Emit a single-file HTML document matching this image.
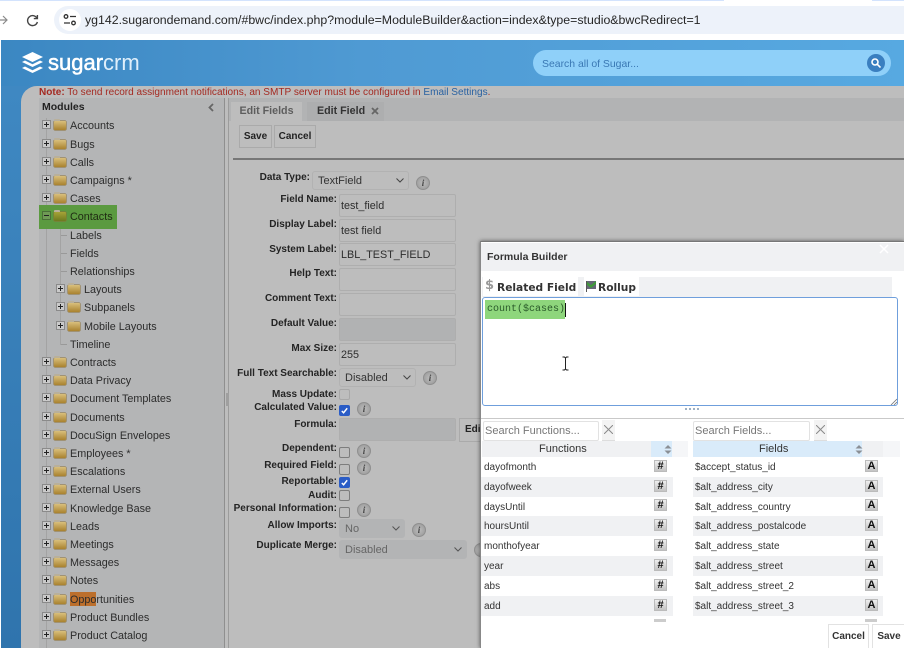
<!DOCTYPE html>
<html><head><meta charset="utf-8"><title>SugarCRM Studio</title>
<style>
html,body{margin:0;padding:0;width:904px;height:648px;overflow:hidden;background:#fff}
#w{position:relative;width:904px;height:648px;overflow:hidden;font-family:"Liberation Sans",sans-serif;font-size:11px;color:#222;filter:blur(.35px)}
#w div,#w span.a,#w i,#w svg.a{position:absolute;display:block}
i{font-style:normal}
.r{left:0;width:224px;height:18px;line-height:18px;color:#2c2c2c;white-space:nowrap;font-size:10.8px;margin-top:.9px}
.r span{position:absolute;left:70px;top:0}
.r .p{left:42px;top:3px;width:7px;height:7px;border:1px solid #8a8a8a;background:#cacaca}
.r .p:after{content:"";position:absolute;left:1px;top:3px;width:5px;height:1px;background:#222}
.r .p:before{content:"";position:absolute;left:3px;top:1px;width:1px;height:5px;background:#222}
.r .p.m:before{display:none}
.r .f{left:54px;top:4px;width:12px;height:9px;background:linear-gradient(#d9bf7c,#a9822f);border-radius:1px;box-shadow:0 0 0 .5px #8b6f33}
.r .f:before{content:"";position:absolute;left:0;top:-2px;width:6px;height:2px;background:#b9b09a;border-radius:1px 1px 0 0}
.r.n span{left:84px}.r.n .p{left:56px}.r.n .f{left:68px}
.r.l:before{content:"";position:absolute;left:61px;top:8px;width:6px;height:1px;background:#999}
.lb{right:567px;font-weight:bold;font-size:10px;color:#242424;white-space:nowrap;line-height:14px;margin-top:1px}
.in{left:339px;width:115px;height:21px;border:1px solid #aeaeae;border-radius:2px;background:#bdbdbd;line-height:23px;font-size:10.8px;color:#2d2d2d;text-indent:1px}
.sel{border:1px solid #b2b2b2;border-radius:3px;height:17px;line-height:18px;font-size:11px;color:#333;text-indent:5px;background:#bdbdbd}
.sel svg{position:absolute;right:4px;top:6px}
.ic{width:12px;height:12px;border-radius:50%;background:radial-gradient(#bcbcbc,#969696);border:1px solid #8f8f8f;font:italic bold 9px/12px "Liberation Serif",serif;text-align:center;color:#444}
.cb{left:339px;width:9px;height:9px;border:1px solid #7d7d7d;border-radius:2px}
.cb.on{background:#2a5cc6;border-color:#2a5cc6}
.cb.on svg{position:absolute;left:0;top:0}
.cb.e{border-color:#a8a8a8}
.btn{height:21px;background:#bdbdbd;border:1px solid #aaa;font-weight:bold;font-size:10px;line-height:21px;text-align:center;color:#222}
.fr,.fb{height:19px;line-height:22px;font-size:10px;color:#333;white-space:nowrap}
.rb{width:11px;height:10px;border:1px solid #bbb;background:linear-gradient(#eee,#c4c4c4);font-weight:bold;font-size:11px;line-height:11px;text-align:center;color:#111}
</style></head><body><div id="w">

<!-- browser bar -->
<div style="left:0;top:0;width:724px;height:1px;background:#d3e3fd"></div>
<div style="left:872px;top:0;width:32px;height:1px;background:#d3e3fd"></div>
<div style="left:54px;top:6px;width:850px;height:28px;background:#edf2fa;border-radius:14px 0 0 14px"></div>
<div style="left:59px;top:9px;width:22px;height:22px;background:#fff;border-radius:50%"></div>
<svg class="a" style="left:62px;top:13px" width="16" height="14" viewBox="0 0 16 14" fill="none" stroke="#333" stroke-width="1.3"><circle cx="4" cy="3.5" r="1.8"/><path d="M8 3.5h6M2 10h6"/><circle cx="11.5" cy="10" r="1.8"/></svg>
<svg class="a" style="left:0;top:14px" width="8" height="12" viewBox="0 0 8 12" fill="none" stroke="#8a8a8a" stroke-width="1.2"><path d="M0 6h7M3 2l4 4-4 4"/></svg>
<svg class="a" style="left:26px;top:14px" width="13" height="13" viewBox="0 0 13 13" fill="none" stroke="#444" stroke-width="1.4"><path d="M11 4.2A5 5 0 1 0 11.4 8"/><path d="M11.4 1v3.6H7.8" /></svg>
<div style="left:85px;top:12px;font-size:12.35px;line-height:16px;color:#262626;white-space:nowrap">yg142.sugarondemand.com/#bwc/index.php?module=ModuleBuilder&amp;action=index&amp;type=studio&amp;bwcRedirect=1</div>

<!-- header -->
<div style="left:1px;top:40px;width:903px;height:46px;background:linear-gradient(90deg,#3b87c2,#4f9ad3 40%,#57a9e1)"></div>
<div style="left:1px;top:86px;width:40px;height:562px;background:linear-gradient(#3f88c2,#2f74ad)"></div>
<svg class="a" style="left:21px;top:52px" width="23" height="23" viewBox="0 0 23 23" fill="#fff"><path d="M11.5 0L22 5 11.500 10 1 5z"/><path d="M1 10l3-1.500 7.500 3.700 7.500-3.700 3 1.500-10.500 5z"/><path d="M1 16l3-1.500 7.500 3.700 7.500-3.700 3 1.500-10.500 5z"/></svg>
<div style="left:48px;top:48px;font-size:22px;line-height:30px;color:#fff;-webkit-text-stroke:.5px #fff;white-space:nowrap">sugar</div>
<div style="left:103px;top:48px;font-size:22px;line-height:30px;color:#dfeffb;white-space:nowrap">crm</div>
<div style="left:533px;top:50px;width:358px;height:26px;background:#8fd0f9;border-radius:13px"></div>
<div style="left:542px;top:58px;font-size:10.45px;line-height:14px;color:#3a78b4;white-space:nowrap">Search all of Sugar...</div>
<div style="left:867px;top:54px;width:18px;height:18px;background:#3a7fc0;border-radius:50%"></div>
<svg class="a" style="left:871px;top:58px" width="10" height="10" viewBox="0 0 10 10" fill="none" stroke="#fff" stroke-width="1.6"><circle cx="4" cy="4" r="3"/><path d="M6.300 6.300L9.500 9.500"/></svg>

<!-- main -->
<div style="left:21px;top:86px;width:883px;height:562px;background:#bdbdbd;border-radius:16px 0 0 0"></div>
<div style="left:39px;top:85.5px;font-size:10.05px;line-height:13px;color:#a42a22;white-space:nowrap"><b>Note:</b> To send record assignment notifications, an SMTP server must be configured in <span style="color:#2a62a2">Email Settings</span>.</div>
<div style="left:39px;top:98px;width:185px;height:550px;background:#b4b5b6"></div>
<div style="left:224px;top:98px;width:1px;height:550px;background:#8f8f8f"></div>
<div style="left:228px;top:98px;width:1px;height:550px;background:#9c9c9c"></div>
<div style="left:226px;top:393px;width:3px;height:13px;background:#9f9f9f"></div>
<div style="left:42px;top:100px;font-weight:bold;font-size:10.5px;line-height:14px;color:#222">Modules</div>
<svg class="a" style="left:208px;top:103px" width="6" height="9" viewBox="0 0 6 9" fill="none" stroke="#666" stroke-width="1.8"><path d="M5 1L1.500 4.500 5 8"/></svg>
<div style="left:46px;top:118px;width:1px;height:530px;background:#a3a3a3"></div>
<div style="left:60px;top:225px;width:1px;height:120px;background:#a3a3a3"></div>

<div style="left:39px;top:205px;width:78px;height:24px;background:#5b9a40"></div>
<div style="left:70px;top:592px;width:26px;height:14px;background:#bc6f2c"></div>

<div class="r" style="top:116.5px"><i class="p"></i><i class="f"></i><span>Accounts</span></div>
<div class="r" style="top:134.7px"><i class="p"></i><i class="f"></i><span>Bugs</span></div>
<div class="r" style="top:152.9px"><i class="p"></i><i class="f"></i><span>Calls</span></div>
<div class="r" style="top:171.1px"><i class="p"></i><i class="f"></i><span>Campaigns *</span></div>
<div class="r" style="top:189.3px"><i class="p"></i><i class="f"></i><span>Cases</span></div>
<div class="r" style="top:207.5px"><i class="p m" style="background:#6f9a55;border-color:#4a6f38"></i><i class="f" style="background:linear-gradient(#a7a337,#6d7a1f)"></i><span style="color:#1f2a12">Contacts</span></div>
<div class="r l" style="top:225.8px"><span>Labels</span></div>
<div class="r l" style="top:244px"><span>Fields</span></div>
<div class="r l" style="top:262.2px"><span>Relationships</span></div>
<div class="r n" style="top:280.4px"><i class="p"></i><i class="f"></i><span>Layouts</span></div>
<div class="r n" style="top:298.6px"><i class="p"></i><i class="f"></i><span>Subpanels</span></div>
<div class="r n" style="top:316.8px"><i class="p"></i><i class="f"></i><span>Mobile Layouts</span></div>
<div class="r l" style="top:335px"><span>Timeline</span></div>
<div class="r" style="top:353.2px"><i class="p"></i><i class="f"></i><span>Contracts</span></div>
<div class="r" style="top:371.4px"><i class="p"></i><i class="f"></i><span>Data Privacy</span></div>
<div class="r" style="top:389.6px"><i class="p"></i><i class="f"></i><span>Document Templates</span></div>
<div class="r" style="top:407.8px"><i class="p"></i><i class="f"></i><span>Documents</span></div>
<div class="r" style="top:426px"><i class="p"></i><i class="f"></i><span>DocuSign Envelopes</span></div>
<div class="r" style="top:444.2px"><i class="p"></i><i class="f"></i><span>Employees *</span></div>
<div class="r" style="top:462.4px"><i class="p"></i><i class="f"></i><span>Escalations</span></div>
<div class="r" style="top:480.6px"><i class="p"></i><i class="f"></i><span>External Users</span></div>
<div class="r" style="top:498.8px"><i class="p"></i><i class="f"></i><span>Knowledge Base</span></div>
<div class="r" style="top:517px"><i class="p"></i><i class="f"></i><span>Leads</span></div>
<div class="r" style="top:535.2px"><i class="p"></i><i class="f"></i><span>Meetings</span></div>
<div class="r" style="top:553.4px"><i class="p"></i><i class="f"></i><span>Messages</span></div>
<div class="r" style="top:571.6px"><i class="p"></i><i class="f"></i><span>Notes</span></div>
<div class="r" style="top:589.8px"><i class="p"></i><i class="f"></i><span>Opportunities</span></div>
<div class="r" style="top:608px"><i class="p"></i><i class="f"></i><span>Product Bundles</span></div>
<div class="r" style="top:626.5px"><i class="p"></i><i class="f"></i><span>Product Catalog</span></div>

<!-- tabs -->
<div style="left:229px;top:98px;width:675px;height:23px;background:#b2b3b4"></div>
<div style="left:231px;top:102px;width:71px;height:19px;background:#bdbdbd;font-weight:bold;font-size:10.7px;line-height:19px;text-align:center;color:#5d5d5d">Edit Fields</div>
<div style="left:307px;top:102px;width:77px;height:19px;background:#adaeaf;font-weight:bold;font-size:10.7px;line-height:19px;color:#333;text-indent:10px">Edit Field</div>
<svg class="a" style="left:371px;top:107px" width="8" height="8" viewBox="0 0 8 8" stroke="#666" stroke-width="1.8"><path d="M1 1l6 6M7 1L1 7"/></svg>
<div class="btn" style="left:239px;top:125px;width:31px">Save</div>
<div class="btn" style="left:274px;top:125px;width:40px">Cancel</div>
<div style="left:233px;top:158px;width:671px;height:1.5px;background:#777"></div>

<!-- form -->
<div class="lb" style="top:170px;right:594px">Data Type:</div>
<div class="sel" style="left:312px;top:171px;width:95px">TextField<svg width="8" height="5" viewBox="0 0 8 5" fill="none" stroke="#444" stroke-width="1"><path d="M.5.5L4 4 7.500.5"/></svg></div>
<div class="ic" style="left:416px;top:176px">i</div>
<div class="lb" style="top:192px">Field Name:</div><div class="in" style="top:194px">test_field</div>
<div class="lb" style="top:217px">Display Label:</div><div class="in" style="top:219px">test field</div>
<div class="lb" style="top:242px">System Label:</div><div class="in" style="top:243px">LBL_TEST_FIELD</div>
<div class="lb" style="top:266px">Help Text:</div><div class="in" style="top:268px"></div>
<div class="lb" style="top:291px">Comment Text:</div><div class="in" style="top:293px"></div>
<div class="lb" style="top:316px">Default Value:</div><div class="in" style="top:318px;background:#b1b2b3"></div>
<div class="lb" style="top:341px">Max Size:</div><div class="in" style="top:343px">255</div>
<div class="lb" style="top:366px">Full Text Searchable:</div>
<div class="sel" style="left:339px;top:368px;width:75px">Disabled<svg width="8" height="5" viewBox="0 0 8 5" fill="none" stroke="#444" stroke-width="1"><path d="M.5.5L4 4 7.500.5"/></svg></div>
<div class="ic" style="left:423px;top:371px">i</div>
<div class="lb" style="top:387px">Mass Update:</div><div class="cb e" style="top:389px"></div>
<div class="lb" style="top:400px">Calculated Value:</div>
<div class="cb on" style="top:405px"><svg width="9" height="9" viewBox="0 0 10 10" fill="none" stroke="#fff" stroke-width="1.6"><path d="M2 5.500L4 7.500 8 2.500"/></svg></div>
<div class="ic" style="left:357px;top:402px">i</div>
<div class="lb" style="top:417px">Formula:</div><div class="in" style="top:418px;background:#b1b2b3"></div>
<div class="btn" style="left:459px;top:418px;width:30px;height:22px;line-height:22px;text-align:left;text-indent:5px">Edit</div>
<div class="lb" style="top:441px">Dependent:</div><div class="cb" style="top:447px"></div><div class="ic" style="left:357px;top:444px">i</div>
<div class="lb" style="top:458px">Required Field:</div><div class="cb" style="top:464px"></div><div class="ic" style="left:357px;top:461px">i</div>
<div class="lb" style="top:474px">Reportable:</div>
<div class="cb on" style="top:477px"><svg width="9" height="9" viewBox="0 0 10 10" fill="none" stroke="#fff" stroke-width="1.6"><path d="M2 5.500L4 7.500 8 2.500"/></svg></div>
<div class="lb" style="top:488px">Audit:</div><div class="cb" style="top:490px"></div>
<div class="lb" style="top:501px">Personal Information:</div><div class="cb" style="top:507px"></div><div class="ic" style="left:357px;top:503px">i</div>
<div class="lb" style="top:518px">Allow Imports:</div>
<div class="sel" style="left:339px;top:519px;width:64px;background:#b3b4b5;color:#666;border-color:#b3b4b5">No<svg width="8" height="5" viewBox="0 0 8 5" fill="none" stroke="#555" stroke-width="1"><path d="M.5.5L4 4 7.500.5"/></svg></div>
<div class="ic" style="left:412px;top:523px">i</div>
<div class="lb" style="top:538px">Duplicate Merge:</div>
<div class="sel" style="left:339px;top:540px;width:126px;background:#b3b4b5;color:#666;border-color:#b3b4b5">Disabled<svg width="8" height="5" viewBox="0 0 8 5" fill="none" stroke="#555" stroke-width="1"><path d="M.5.5L4 4 7.500.5"/></svg></div>
<div class="ic" style="left:474px;top:543px">i</div>

<!-- dialog -->
<div style="left:480px;top:241px;width:424px;height:407px;background:#fff;box-shadow:0 0 4px rgba(0,0,0,.55);border-top:1px solid #777;border-left:1px solid #888;box-sizing:border-box"></div>
<div style="left:481px;top:243px;width:423px;height:28px;background:#f0f1f3"></div>
<div style="left:487px;top:250px;font-weight:bold;font-size:10.5px;line-height:14px;color:#333">Formula Builder</div>
<svg class="a" style="left:879px;top:244px" width="10" height="10" viewBox="0 0 10 10" stroke="#fff" stroke-width="1.5"><path d="M1 1l8 8M9 1L1 9"/></svg>

<div style="left:482px;top:277px;width:410px;height:20px;background:#f0f1f3"></div>
<div style="left:483px;top:277px;width:95px;height:19px;background:#fff"></div>
<div style="left:584px;top:277px;width:55px;height:19px;background:#fff"></div>
<div style="left:485px;top:279px;font:bold 13px/14px 'DejaVu Sans',sans-serif;color:#9a9a9a">$</div>
<div style="left:497px;top:281px;font:bold 10.65px/14px 'DejaVu Sans',sans-serif;color:#333;white-space:nowrap">Related Field</div>
<svg class="a" style="left:585px;top:280px" width="12" height="12" viewBox="0 0 12 12"><rect x="1" y="1" width="10" height="8" fill="#667"/><path d="M1 1l5 4 5-4v3L6 8 1 4z" fill="#3f9a3a"/><rect x="1" y="1" width="1" height="11" fill="#555"/></svg>
<div style="left:598px;top:281px;font:bold 10.65px/14px 'DejaVu Sans',sans-serif;color:#333">Rollup</div>

<div style="left:482px;top:297px;width:414px;height:107px;border:1.5px solid #6f9fdc;border-radius:3px;background:#fff"></div>
<div style="left:485px;top:300px;width:80px;height:19px;background:#8ed67c"></div>
<div style="left:487px;top:303px;font:10px/13px 'Liberation Mono',monospace;color:#2a5a2a;white-space:nowrap">count($cases)</div>
<div style="left:565px;top:303px;width:1px;height:14px;background:#111"></div>
<svg class="a" style="left:561px;top:356px" width="9" height="15" viewBox="0 0 9 15" fill="none" stroke="#222" stroke-width="1"><path d="M1.500 1h2l1 1 1-1h2M4.500 2v11M1.500 14h2l1-1 1 1h2"/></svg>
<svg class="a" style="left:890px;top:398px" width="7" height="7" viewBox="0 0 7 7" stroke="#777" stroke-width=".8"><path d="M1 7l6-6M4 7l3-3"/></svg>
<div style="left:685px;top:408px;width:15px;height:2px;background:repeating-linear-gradient(90deg,#9db0c4 0 2px,transparent 2px 4px)"></div>
<div style="left:481px;top:418px;width:423px;height:1px;background:#c9c9c9"></div>

<div style="left:483px;top:421px;width:114px;height:18px;border:1px solid #e2e2e2;border-radius:2px;font-size:11px;line-height:19px;color:#777;text-indent:1px;white-space:nowrap">Search Functions...</div>
<div style="left:602px;top:420px;width:13px;height:20px;background:#f3f3f3;border-bottom:1px solid #ddd"></div>
<svg class="a" style="left:604px;top:425px" width="9" height="9" viewBox="0 0 9 9" stroke="#8a8a8a" stroke-width="1"><path d="M0 0l9 9M9 0L0 9"/></svg>
<div style="left:693px;top:421px;width:115px;height:18px;border:1px solid #e2e2e2;border-radius:2px;font-size:11px;line-height:19px;color:#777;text-indent:1px;white-space:nowrap">Search Fields...</div>
<div style="left:814px;top:420px;width:13px;height:20px;background:#f3f3f3;border-bottom:1px solid #ddd"></div>
<svg class="a" style="left:816px;top:425px" width="9" height="9" viewBox="0 0 9 9" stroke="#8a8a8a" stroke-width="1"><path d="M0 0l9 9M9 0L0 9"/></svg>

<div style="left:482px;top:441px;width:169px;height:16px;background:#f0f1f3;text-indent:57px;font-size:11px;line-height:16px;color:#333">Functions</div>
<div style="left:651px;top:441px;width:21px;height:16px;background:#d9ebfa"></div>
<div style="left:672px;top:441px;width:16px;height:16px;background:#f5f6f8"></div>
<div style="left:693px;top:441px;width:169px;height:16px;background:#d9ebfa;text-indent:66px;font-size:11px;line-height:16px;color:#333">Fields</div>
<div style="left:862px;top:441px;width:21px;height:16px;background:#f0f1f3"></div>
<div style="left:883px;top:441px;width:17px;height:16px;background:#f5f6f8"></div>
<svg class="a" style="left:664px;top:445px" width="8" height="9" viewBox="0 0 8 9" fill="#8a8f95"><path d="M4 0l3.500 3.500h-7zM.5 5.500h7L4 9z"/></svg>
<svg class="a" style="left:855px;top:445px" width="8" height="9" viewBox="0 0 8 9" fill="#8a8f95"><path d="M4 0l3.500 3.500h-7zM.5 5.500h7L4 9z"/></svg>

<!-- gray alternating rows -->
<div style="left:481px;top:477px;width:192px;height:20px;background:#f0f1f3"></div>
<div style="left:481px;top:516px;width:192px;height:20px;background:#f0f1f3"></div>
<div style="left:481px;top:556px;width:192px;height:20px;background:#f0f1f3"></div>
<div style="left:481px;top:596px;width:192px;height:20px;background:#f0f1f3"></div>
<div style="left:693px;top:477px;width:190px;height:20px;background:#f0f1f3"></div>
<div style="left:693px;top:516px;width:190px;height:20px;background:#f0f1f3"></div>
<div style="left:693px;top:556px;width:190px;height:20px;background:#f0f1f3"></div>
<div style="left:693px;top:596px;width:190px;height:20px;background:#f0f1f3"></div>

<div class="fr" style="left:484px;top:457px">dayofmonth</div>
<div class="fr" style="left:484px;top:477px">dayofweek</div>
<div class="fr" style="left:484px;top:497px">daysUntil</div>
<div class="fr" style="left:484px;top:516px">hoursUntil</div>
<div class="fr" style="left:484px;top:536px">monthofyear</div>
<div class="fr" style="left:484px;top:556px">year</div>
<div class="fr" style="left:484px;top:576px">abs</div>
<div class="fr" style="left:484px;top:596px">add</div>
<div class="fb" style="left:695px;top:457px">$accept_status_id</div>
<div class="fb" style="left:695px;top:477px">$alt_address_city</div>
<div class="fb" style="left:695px;top:497px">$alt_address_country</div>
<div class="fb" style="left:695px;top:516px">$alt_address_postalcode</div>
<div class="fb" style="left:695px;top:536px">$alt_address_state</div>
<div class="fb" style="left:695px;top:556px">$alt_address_street</div>
<div class="fb" style="left:695px;top:576px">$alt_address_street_2</div>
<div class="fb" style="left:695px;top:596px">$alt_address_street_3</div>

<div class="rb" style="left:654px;top:460px">#</div><div class="rb" style="left:654px;top:480px">#</div><div class="rb" style="left:654px;top:499px">#</div><div class="rb" style="left:654px;top:519px">#</div><div class="rb" style="left:654px;top:539px">#</div><div class="rb" style="left:654px;top:559px">#</div><div class="rb" style="left:654px;top:579px">#</div><div class="rb" style="left:654px;top:599px">#</div>
<div class="rb" style="left:865px;top:460px">A</div><div class="rb" style="left:865px;top:480px">A</div><div class="rb" style="left:865px;top:499px">A</div><div class="rb" style="left:865px;top:519px">A</div><div class="rb" style="left:865px;top:539px">A</div><div class="rb" style="left:865px;top:559px">A</div><div class="rb" style="left:865px;top:579px">A</div><div class="rb" style="left:865px;top:599px">A</div>
<div style="left:654px;top:619px;width:12px;height:3px;background:#ccc"></div>
<div style="left:865px;top:619px;width:12px;height:3px;background:#ccc"></div>

<div style="left:828px;top:624px;width:39px;height:24px;border:1px solid #e2e2e2;border-bottom:0;font-weight:bold;font-size:10px;line-height:23px;text-align:center;color:#333">Cancel</div>
<div style="left:872px;top:624px;width:32px;height:24px;border-left:1px solid #e2e2e2;border-top:1px solid #e2e2e2;font-weight:bold;font-size:10px;line-height:23px;text-align:center;color:#333">Save</div>

</div></body></html>
